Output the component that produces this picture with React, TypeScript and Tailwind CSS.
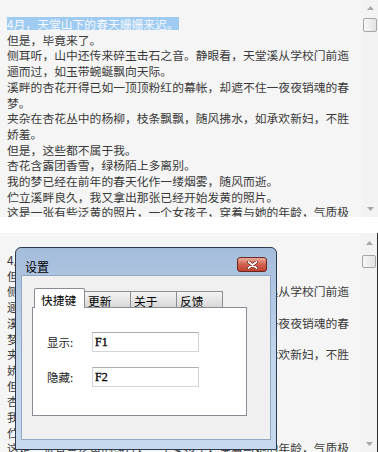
const LINES = [
  "4月，天堂山下的春天姗姗来迟。",
  "但是，毕竟来了。",
  "侧耳听，山中还传来碎玉击石之音。静眼看，天堂溪从学校门前迤",
  "逦而过，如玉带蜿蜒飘向天际。",
  "溪畔的杏花开得已如一顶顶粉红的幕帐，却遮不住一夜夜销魂的春",
  "梦。",
  "夹杂在杏花丛中的杨柳，枝条飘飘，随风拂水，如承欢新妇，不胜",
  "娇羞。",
  "但是，这些都不属于我。",
  "杏花含露团香雪，绿杨陌上多离别。",
  "我的梦已经在前年的春天化作一缕烟雾，随风而逝。",
  "伫立溪畔良久，我又拿出那张已经开始发黄的照片。",
  "这是一张有些泛黄的照片，一个女孩子，穿着与她的年龄，气质极",
]

const cjk = { fontFamily: '"Noto Sans CJK SC", "Noto Sans", sans-serif' }

function Arrow({ up }: { up?: boolean }) {
  return (
    <div className="h-[16px] flex items-center justify-center">
      <svg width="7" height="4" viewBox="0 0 7 4">
        <path d={up ? "M0 4 L3.5 0 L7 4 Z" : "M0 0 L3.5 4 L7 0 Z"} fill="#a8a8a8" />
      </svg>
    </div>
  )
}

function Scrollbar({ top, thumbTop, thumbH }: { top: number; thumbTop: number; thumbH: number }) {
  return (
    <div className="w-[16px] h-full flex flex-col bg-[#f3f3f3]" style={{ paddingTop: top }}>
      <Arrow up />
      <div
        className="ml-px w-[14px] rounded-[2px] border border-[#a6a6a6] bg-linear-to-r from-[#f6f6f6] to-[#e4e4e4]"
        style={{ marginTop: thumbTop, height: thumbH }}
      />
      <div className="flex-1" />
      <Arrow />
    </div>
  )
}

function TextPanel({ padTop, highlight }: { padTop: number; highlight?: boolean }) {
  return (
    <div className="flex-1 overflow-hidden pl-[7px]" style={{ paddingTop: padTop }}>
      {LINES.map((l, i) => (
        <div key={i} className="whitespace-nowrap text-[11.8px] leading-[15.7px] text-[#3a3a3a]">
          {i === 0 && highlight ? (
            <span className="inline-block leading-[13px] bg-[#9fcbf0] text-[#f4f9ff]">{l}</span>
          ) : (
            l
          )}
        </div>
      ))}
    </div>
  )
}

function SettingsDialog() {
  const tabs = ["更新", "关于", "反馈"]
  return (
    <div className="absolute left-[15px] top-[14px] w-[262px] h-[203px] border border-[#2c3b4f] rounded-t-[6px] bg-linear-to-b from-[#a4bddb] via-[#c0d4eb] to-[#c6d9ee] flex flex-col">
      <div className="h-[27px] flex justify-between items-start">
        <div className="ml-[9px] mt-[11px] text-[12px] leading-[16px] text-black">设置</div>
        <div className="mt-[9px] mr-[9px] w-[30px] h-[15px] rounded-[3px] border border-[#6a2a22] bg-linear-to-b from-[#e9ab9c] via-[#d2604e] to-[#bf4232] flex items-center justify-center">
          <svg width="11" height="8" viewBox="0 0 11 8">
            <path d="M1.5 1 L9.5 7 M9.5 1 L1.5 7" stroke="#5a2018" strokeWidth="3.2" strokeLinecap="round" />
            <path d="M1.5 1 L9.5 7 M9.5 1 L1.5 7" stroke="#ffffff" strokeWidth="1.8" strokeLinecap="round" />
          </svg>
        </div>
      </div>
      <div className="ml-[5px] mr-[5px] h-[165px] border border-[#91a7c2] bg-[#f0f0f0] pl-[10px] pt-[12px]">
        <div className="h-[19px] flex items-end pl-[2px] relative z-10">
          <div className="mb-[-1px] h-[20px] w-[51px] border border-b-0 border-[#898c95] bg-white rounded-t-[2px] pl-[6px] pt-[3px] text-[11.7px] leading-[16px] text-black">
            快捷键
          </div>
          {tabs.map((t) => (
            <div
              key={t}
              className="h-[16px] w-[47px] -ml-px first:ml-0 border border-b-0 border-[#8c8e94] bg-linear-to-b from-[#f4f4f4] to-[#d8d8d8] pl-[3px] pt-[2px] text-[11.7px] leading-[14px] text-black"
            >
              {t}
            </div>
          ))}
        </div>
        <div className="w-[215px] h-[109px] border border-[#898c95] bg-white pt-[24px] pl-[14px] flex flex-col gap-[15px]">
          {[
            ["显示:", "F1"],
            ["隐藏:", "F2"],
          ].map(([label, key]) => (
            <div key={label} className="flex items-center h-[20px]">
              <div className="w-[45px] text-[11.5px] leading-[16px] text-[#1a1a1a]">{label}</div>
              <div className="w-[107px] h-[20px] border border-[#d2d5d9] border-t-[#abadb3] bg-white pl-[2px] flex items-center">
                <span
                  className="text-[12px] leading-[14px] text-black"
                  style={{ fontFamily: '"Liberation Serif", serif', WebkitTextStroke: "0.3px #000" }}
                >
                  {key}
                </span>
              </div>
            </div>
          ))}
        </div>
      </div>
    </div>
  )
}

export default function App() {
  return (
    <div className="w-[378px] h-[452px] bg-white flex flex-col overflow-hidden" style={cjk}>
      <div className="h-[217px] flex bg-[#f5f5f5]">
        <TextPanel padTop={16} highlight />
        <Scrollbar top={0} thumbTop={2} thumbH={14} />
      </div>
      <div className="h-[16px]" />
      <div className="h-[219px] flex bg-[#f5f5f5] relative border-r border-[#2a2a2a]">
        <TextPanel padTop={19} />
        <Scrollbar top={2} thumbTop={4} thumbH={13} />
        <SettingsDialog />
      </div>
    </div>
  )
}
